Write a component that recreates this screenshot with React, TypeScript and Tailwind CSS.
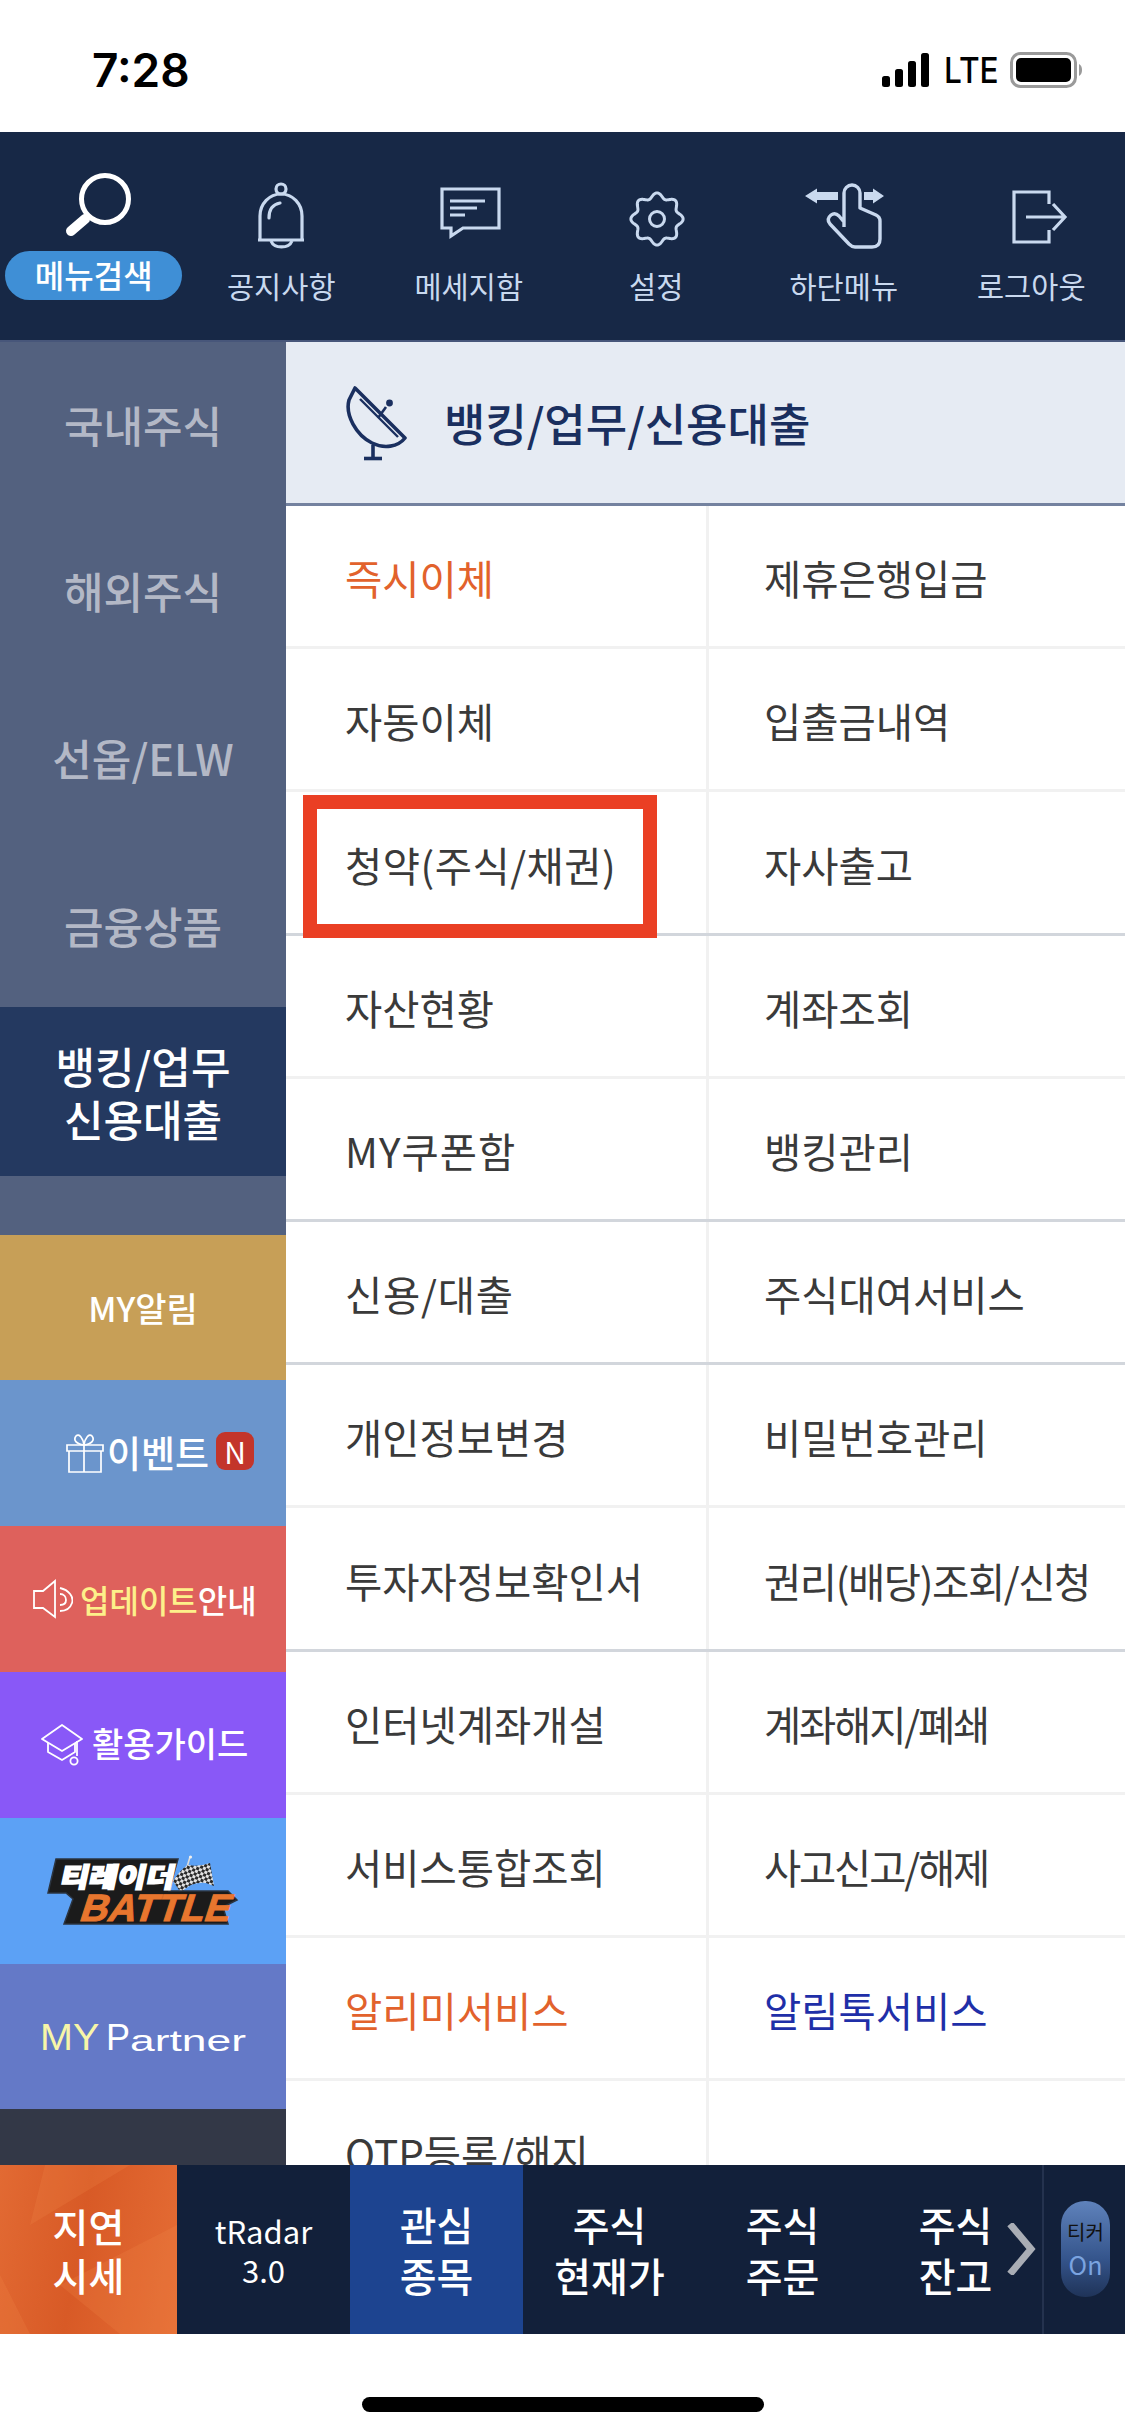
import { ReactNode } from "react";

const ICON = "#c9d9ef";
const NAVY = "#1a2f5f";

// scalloped outline for the settings gear
function gearPath(cx: number, cy: number) {
  const pts: string[] = [];
  for (let i = 0; i < 240; i++) {
    const t = (i / 240) * Math.PI * 2;
    const r = 23.5 + 2.6 * Math.cos(8 * t);
    pts.push(`${(cx + r * Math.sin(t)).toFixed(2)} ${(cy - r * Math.cos(t)).toFixed(2)}`);
  }
  return `M${pts.join("L")}Z`;
}

// Top menu icons use page coordinates in their viewBox
function BellIcon() {
  return (
    <svg width="100" height="74" viewBox="230 180 100 74" fill="none" stroke={ICON} strokeWidth="3.2" strokeLinejoin="round">
      <circle cx="280" cy="189" r="5" />
      <path d="M259 240V216a21 22 0 0 1 42 0V240ZM257 240H303" />
      <path d="M270 241a11 8.5 0 0 0 21 0" />
      <path d="M268 218q0-13 11-15" strokeLinecap="round" />
    </svg>
  );
}

function ChatIcon() {
  return (
    <svg width="100" height="74" viewBox="418 180 100 74" fill="none" stroke={ICON} strokeWidth="3.2">
      <path d="M441 189H498V228H462L450 236V228H441Z" />
      <path d="M449 201H484M449 208H476M449 215H464" />
    </svg>
  );
}

function GearIcon() {
  return (
    <svg width="100" height="74" viewBox="605 180 100 74" fill="none" stroke={ICON} strokeWidth="3">
      <path d={gearPath(656, 219)} />
      <circle cx="656" cy="219" r="7.5" />
    </svg>
  );
}

function HandIcon() {
  return (
    <svg width="100" height="74" viewBox="793 180 100 74" fill="none">
      <g transform="translate(804 185)">
        <path fill={ICON} d="M0 11 12 3.5V7H33V15H12V18.5ZM59 7H68V3.5L79 11 68 18.5V15H59Z" />
        <path stroke={ICON} strokeWidth="3.4" strokeLinejoin="round" d="M39 42V8a8 8 0 0 1 16 0V23L71 30Q75 32 75 36V54Q75 62 67 62H50Q47 62 44 59L25 39Q21 34 26 30Q30 27 34 31L39 37" />
      </g>
    </svg>
  );
}

function LogoutIcon() {
  return (
    <svg width="100" height="74" viewBox="980 180 100 74" fill="none" stroke={ICON} strokeWidth="3.2">
      <path d="M1048 204V192H1013V242H1048V230" />
      <path d="M1025 217H1064M1052 204 1064 217 1052 230" />
    </svg>
  );
}

function SearchIcon() {
  return (
    <svg width="90" height="70" viewBox="48 170 90 70" fill="none" stroke="#fff">
      <circle cx="104" cy="199" r="23.5" strokeWidth="5" />
      <path d="M70 231 84 219" strokeWidth="10" strokeLinecap="round" />
    </svg>
  );
}

function DishIcon() {
  return (
    <svg width="64" height="78" viewBox="345 384 64 78" fill="none" stroke={NAVY} strokeWidth="3.6" strokeLinejoin="round">
      <path d="M355 388 405 438C398 447 384 449 372 443 356 435 345 415 349 400Z" />
      <path d="M360 399 398 437" strokeWidth="2.4" />
      <path d="M378 418 386 407" strokeWidth="2.6" />
      <circle cx="389.5" cy="403" r="3.4" fill={NAVY} stroke="none" />
      <path d="M373 445V458" />
      <path d="M364 458.5H382" strokeWidth="3.6" />
    </svg>
  );
}

function GiftIcon() {
  return (
    <svg width="38" height="40" viewBox="0 0 38 40" fill="none" stroke="#fff" strokeWidth="1.7">
      <path d="M1 12H37V18H1ZM3 18V39H35V18M18 12V39" />
      <path d="M18 12C10 11 7 7 10 3 13 0 17 5 18 12ZM18 12C26 11 29 7 26 3 23 0 19 5 18 12Z" />
    </svg>
  );
}

function SpeakerIcon() {
  return (
    <svg width="40" height="40" viewBox="0 0 40 40" fill="none" stroke="#fff" strokeWidth="1.8">
      <path d="M1 12H10L22 2V38L10 29H1Z" />
      <path d="M27 9C36 11 41 18 39 24 37 30 32 32 27 32" />
      <path d="M27 15C31 15 33 18 33 21 33 24 31 26 27 26" />
    </svg>
  );
}

function CapIcon() {
  return (
    <svg width="42" height="42" viewBox="0 0 42 42" fill="none" stroke="#fff" strokeWidth="1.8" strokeLinejoin="round">
      <path d="M1 15 21 1 41 15 21 27Z" />
      <path d="M7 19V28L21 36 34 28V19" />
      <path d="M36 17V32" />
      <circle cx="33" cy="37" r="3.6" />
    </svg>
  );
}

function BattleLogo() {
  return (
    <svg width="194" height="74" viewBox="45 1853 194 74" className="font-['Noto_Sans_CJK_KR','Liberation_Sans',sans-serif]">
      <defs>
        <pattern id="flag" width="6" height="6" patternUnits="userSpaceOnUse" patternTransform="rotate(25)">
          <rect width="6" height="6" fill="#e2e2e2" />
          <rect width="3" height="3" fill="#2a2a2a" />
          <rect x="3" y="3" width="3" height="3" fill="#2a2a2a" />
        </pattern>
      </defs>
      <path d="M186 1866 189 1856" stroke="#ddd" strokeWidth="1.6" />
      <circle cx="189.5" cy="1856" r="1.6" fill="#eee" />
      <path fill="url(#flag)" d="M172 1880Q180 1868 187 1864 198 1866 209 1862L213 1885 205 1882Q190 1880 180 1892Z" />
      <path fill="#1b1b1b" stroke="#2b3440" strokeWidth="1.5" d="M55 1858H177L168 1890H227L236 1899 222 1906 227 1923H63L72 1898 65 1892H47Z" />
      <g transform="translate(58 1886) skewX(-12)">
        <text x="0" y="0" fill="#fff" stroke="#fff" strokeWidth="1.6" fontSize="27" fontWeight="900" textLength="114" lengthAdjust="spacingAndGlyphs">티레이더</text>
      </g>
      <g transform="translate(77 1920) skewX(-18)">
        <text x="0" y="0" fill="#e8762e" stroke="#e8762e" strokeWidth="1" fontFamily="Liberation Sans, sans-serif" fontSize="38" fontWeight="700" textLength="150" lengthAdjust="spacingAndGlyphs">BATTLE</text>
      </g>
    </svg>
  );
}

function SignalIcon() {
  return (
    <svg width="52" height="34" viewBox="0 0 52 34" fill="#000">
      <rect x="2" y="23" width="8" height="11" rx="2.5" />
      <rect x="15" y="16" width="8" height="18" rx="2.5" />
      <rect x="28" y="8" width="8" height="26" rx="2.5" />
      <rect x="41" y="0" width="8" height="34" rx="2.5" />
    </svg>
  );
}

function BatteryIcon() {
  return (
    <svg width="72" height="36" viewBox="0 0 72 36">
      <rect x="1.5" y="1.5" width="64" height="33" rx="9" fill="none" stroke="#9a9a9a" strokeWidth="3" />
      <rect x="6" y="6" width="55" height="24" rx="5" fill="#000" />
      <path d="M69 12C71 13 72 15 72 18 72 21 71 23 69 24Z" fill="#9a9a9a" />
    </svg>
  );
}

const topMenus = [
  { label: "공지사항", icon: <BellIcon /> },
  { label: "메세지함", icon: <ChatIcon /> },
  { label: "설정", icon: <GearIcon /> },
  { label: "하단메뉴", icon: <HandIcon /> },
  { label: "로그아웃", icon: <LogoutIcon /> },
];

function StatusBar() {
  return (
    <div className="h-[132px] bg-white flex items-start justify-between pt-[48px] pl-[92px] pr-[43px]">
      <span className="font-['Inter',sans-serif] text-[46px] leading-[44px] font-semibold text-black">7:28</span>
      <div className="flex items-center gap-[12px] pt-[4px]">
        <SignalIcon />
        <span className="font-['Inter',sans-serif] text-[36px] leading-[34px] font-medium text-black w-[54px] scale-x-[0.88] origin-left">LTE</span>
        <BatteryIcon />
      </div>
    </div>
  );
}

function TopMenu() {
  return (
    <div className="h-[210px] bg-[#172846] border-b-2 border-[#47567a] grid grid-cols-6">
      <div className="flex flex-col items-center pt-[38px]">
        <SearchIcon />
        <span className="mt-[11px] w-[177px] h-[49px] rounded-full bg-[#3f8fd6] text-white text-[32px] leading-[47px] font-medium text-center">메뉴검색</span>
      </div>
      {topMenus.map((m) => (
        <div key={m.label} className="flex flex-col items-center pt-[48px]">
          {m.icon}
          <span className="mt-[11px] text-[29.5px] leading-[40px] text-[#c9d9ef]">{m.label}</span>
        </div>
      ))}
    </div>
  );
}

function SideItem({ children, className = "" }: { children: ReactNode; className?: string }) {
  return (
    <div className={`flex flex-col items-center justify-center text-[43px] leading-[53px] font-medium text-center ${className}`}>
      {children}
    </div>
  );
}

function Sidebar() {
  return (
    <div className="w-[286px] shrink-0 bg-[#53617f] flex flex-col">
      <SideItem className="h-[161px] pt-[3px] text-[#b3b8c6]">국내주식</SideItem>
      <SideItem className="h-[168px] pt-[7px] text-[#b3b8c6]">해외주식</SideItem>
      <SideItem className="h-[168px] pt-[5px] text-[#b3b8c6]">선옵/ELW</SideItem>
      <SideItem className="h-[168px] pt-[5px] text-[#b3b8c6]">금융상품</SideItem>
      <SideItem className="h-[169px] bg-[#243960] text-white">
        <span>뱅킹/업무</span>
        <span>신용대출</span>
      </SideItem>
      <div className="h-[59px]" />
      <div className="h-[145px] bg-[#c79f57] flex items-center justify-center text-white text-[34px] font-medium">MY알림</div>
      <div className="h-[146px] bg-[#6b95cc] flex items-center pl-[66px] gap-[3px] text-white text-[37px] font-medium">
        <GiftIcon />
        <span>이벤트</span>
        <span className="ml-[4px] w-[38px] h-[38px] rounded-[9px] bg-[#c3352a] text-[30px] leading-[38px] text-center font-normal -mt-[4px]">N</span>
      </div>
      <div className="h-[146px] bg-[#de615c] flex items-center pl-[33px] gap-[7px] text-[32px] font-medium">
        <SpeakerIcon />
        <span className="text-white">
          <span className="text-[#fdf08a]">업데이트</span>안내
        </span>
      </div>
      <div className="h-[146px] bg-[#8958f7] flex items-center pl-[41px] gap-[9px] text-white text-[34px] font-medium">
        <CapIcon />
        <span className="-mt-[5px]">활용가이드</span>
      </div>
      <div className="h-[146px] bg-[#5ca1f5] flex items-center justify-center">
        <BattleLogo />
      </div>
      <div className="h-[145px] bg-[#6479c7] flex items-end pl-[40px] pb-[53px] font-['Liberation_Sans',sans-serif] whitespace-nowrap">
        <span className="w-[66px] text-[36px] leading-[36px] text-[#f7f5a8] origin-left scale-x-[1.1]">MY</span>
        <span className="w-[24px] text-[36px] leading-[36px] text-white">P</span>
        <span className="w-[116px] text-[29px] leading-[30px] text-white origin-left scale-x-[1.53]">artner</span>
      </div>
      <div className="flex-1 bg-[#333847]" />
    </div>
  );
}

const DEFAULT_TEXT = "text-[#3a3a3a]";

const rows: { left: string; right: string; dark?: boolean; leftClass?: string; rightClass?: string; boxed?: boolean }[] = [
  { left: "즉시이체", right: "제휴은행입금", leftClass: "text-[#e2622c]" },
  { left: "자동이체", right: "입출금내역" },
  { left: "청약(주식/채권)", right: "자사출고", dark: true, boxed: true, leftClass: "text-[#3a3a3a] tracking-[0.5px]" },
  { left: "자산현황", right: "계좌조회" },
  { left: "MY쿠폰함", right: "뱅킹관리", dark: true, leftClass: "text-[#3a3a3a] tracking-[1px]" },
  { left: "신용/대출", right: "주식대여서비스", dark: true, leftClass: "text-[#3a3a3a] tracking-[0.8px]" },
  { left: "개인정보변경", right: "비밀번호관리" },
  { left: "투자자정보확인서", right: "권리(배당)조회/신청", dark: true, rightClass: "text-[#3a3a3a] tracking-[-1.4px]" },
  { left: "인터넷계좌개설", right: "계좌해지/폐쇄", rightClass: "text-[#3a3a3a] tracking-[-2.2px]" },
  { left: "서비스통합조회", right: "사고신고/해제", rightClass: "text-[#3a3a3a] tracking-[-2.2px]" },
  { left: "알리미서비스", right: "알림톡서비스", leftClass: "text-[#e2622c]", rightClass: "text-[#1f2fa8]" },
  { left: "OTP등록/해지", right: "" },
];

function MenuPanel() {
  return (
    <div className="flex-1 min-w-0 overflow-hidden bg-white">
      <div className="h-[164px] bg-[#e6ebf3] border-b-[3px] border-[#74829f] flex items-center pl-[59px] gap-[35px]">
        <DishIcon />
        <h2 className="text-[45px] leading-[60px] font-medium text-[#1a2f5f]">뱅킹/업무/신용대출</h2>
      </div>
      {rows.map((r) => (
        <div key={r.left} className={`h-[143.2px] border-b-[3px] flex ${r.dark ? "border-[#d2d6dc]" : "border-[#f1f1f1]"}`}>
          <div className={`relative w-[423px] shrink-0 border-r-[3px] border-[#f1f1f1] flex items-center pl-[59px] pt-[5px] text-[40.5px] ${r.leftClass ?? DEFAULT_TEXT}`}>
            {r.left}
            {r.boxed && <div className="absolute left-[17px] top-[3px] w-[354px] h-[143px] border-[14px] border-[#ea3f24]" />}
          </div>
          <div className={`flex-1 flex items-center pl-[55px] pt-[5px] text-[40.5px] whitespace-nowrap ${r.rightClass ?? DEFAULT_TEXT}`}>{r.right}</div>
        </div>
      ))}
    </div>
  );
}

const bottomTabs = [
  { top: "tRadar", bottom: "3.0", small: true },
  { top: "관심", bottom: "종목", active: true },
  { top: "주식", bottom: "현재가" },
  { top: "주식", bottom: "주문" },
  { top: "주식", bottom: "잔고" },
];

function BottomBar() {
  return (
    <div className="h-[169px] bg-[#12203a] flex text-white">
      <div className="relative w-[177px] bg-[linear-gradient(100deg,#e26a33,#d85a26_45%,#e56d35)] flex flex-col items-center justify-center text-[39px] leading-[49px] font-medium overflow-hidden">
        <svg className="absolute inset-0" width="177" height="169" viewBox="0 0 177 169" fill="#f08a4a" fillOpacity="0.22">
          <path d="M45 0H130L30 60ZM177 60V169H120L60 120ZM0 110 30 169H0Z" />
        </svg>
        <span className="relative">지연</span>
        <span className="relative">시세</span>
      </div>
      {bottomTabs.map((t) => (
        <div
          key={t.top + t.bottom}
          className={`w-[173px] flex flex-col items-center justify-center ${t.active ? "bg-[#1d4490]" : ""} ${
            t.small ? "text-[31px] leading-[39px] font-normal" : "text-[40px] leading-[51px] font-medium"
          }`}
        >
          <span>{t.top}</span>
          <span>{t.bottom}</span>
        </div>
      ))}
      <div className="relative flex-1 border-l-2 border-[#24324e] flex items-center pl-[17px]">
        <div className="w-[49px] h-[96px] -mt-[1px] rounded-[24px] bg-[linear-gradient(#5f82bb,#35558c_60%,#1f3358)] flex flex-col items-center justify-center">
          <span className="text-[#111] text-[20px] leading-[30px]">티커</span>
          <span className="text-[#7ba4e0] text-[25px] leading-[34px]">On</span>
        </div>
        <svg className="absolute -left-[38px] top-[58px]" width="30" height="52" viewBox="0 0 30 52" fill="none" stroke="#a9adb5" strokeWidth="7">
          <path d="M4 1 25 26 4 51" />
        </svg>
      </div>
    </div>
  );
}

export default function App() {
  return (
    <div className="w-[1125px] h-[2436px] bg-white flex flex-col overflow-hidden font-['Noto_Sans_CJK_KR','Liberation_Sans',sans-serif]">
      <StatusBar />
      <TopMenu />
      <div className="h-[1823px] flex overflow-hidden">
        <Sidebar />
        <MenuPanel />
      </div>
      <BottomBar />
      <div className="flex-1 flex justify-center pt-[63px]">
        <div className="w-[402px] h-[15px] rounded-full bg-black" />
      </div>
    </div>
  );
}
